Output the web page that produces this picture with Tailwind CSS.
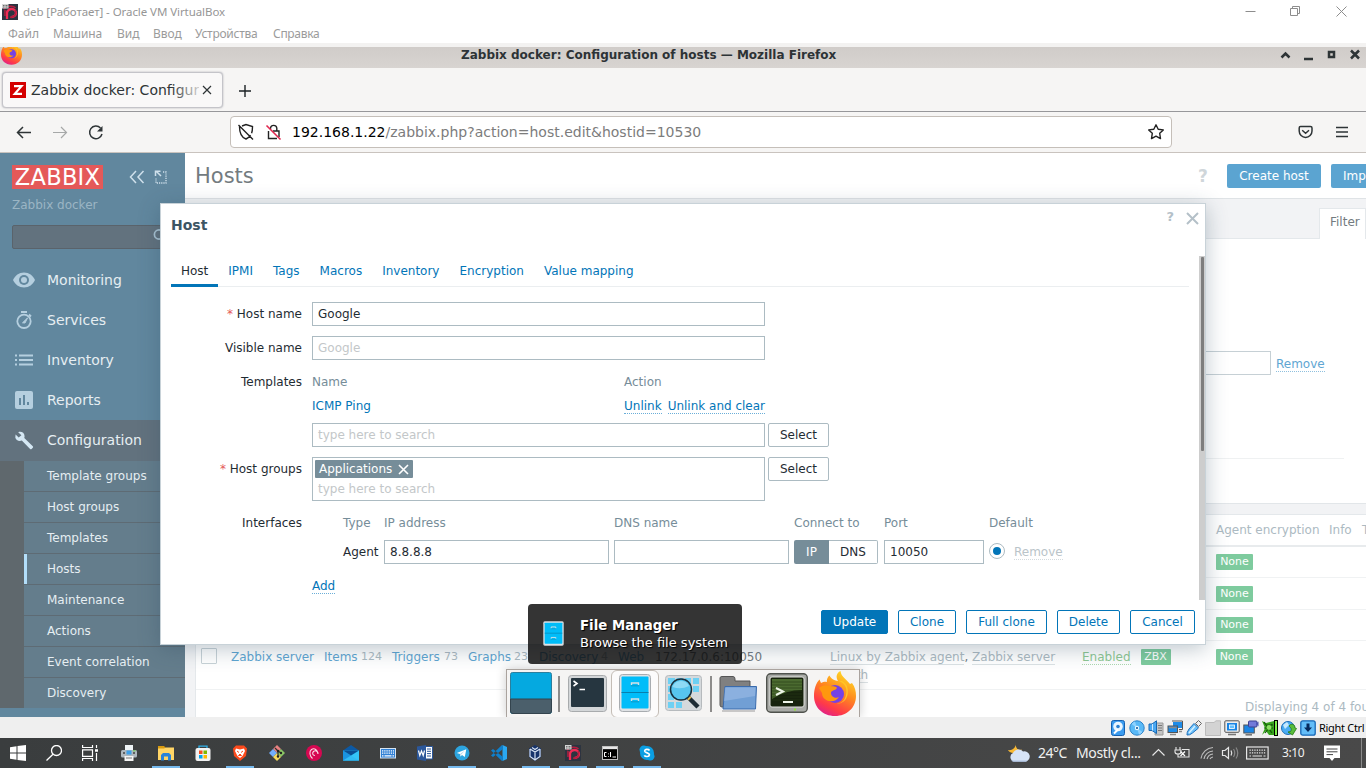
<!DOCTYPE html>
<html lang="en">
<head>
<meta charset="utf-8">
<title>Zabbix docker: Configuration of hosts</title>
<script src="https://cdn.jsdelivr.net/npm/@tailwindcss/browser@4"></script>
</head>
<body class="w-[1366px] h-[768px] overflow-hidden bg-white font-['DejaVu_Sans',sans-serif] text-[12px] leading-[14px] whitespace-nowrap">
<svg class="absolute size-0">
  <defs>
    <linearGradient id="ffo" x1="0.8" y1="0" x2="0.3" y2="1"><stop offset="0" stop-color="#ffe226"/><stop offset=".45" stop-color="#ff8a1f"/><stop offset=".8" stop-color="#ff3b47"/><stop offset="1" stop-color="#e0218a"/></linearGradient>
    <symbol id="firefox" viewBox="0 0 42 45">
      <path d="M21 45C9 45 0 36.500 0 25C0 18 2 12 5.500 8.500L7 12C9 11 11.500 10.500 13 11C12.500 8.500 13.500 6 15.500 4.500C17 8 21 9.500 24 10C21.500 6 22.500 2 26.500 0C27 6 33 8.500 36 13L38 12C41 16 42 20 42 25C42 36.500 33 45 21 45Z" fill="url(#ffo)"/>
      <circle cx="21" cy="23" r="9" fill="#7542e5"/>
      <path d="M5 17C9 13 14 15 17 15C19 15.500 22 15 23 17C21 20 17 19 17 22C17 26 22 28 25 26C21 33 8 31 8 22C7 20 6 19 5 17Z" fill="#ff980e"/>
      <path d="M24 10C30 11 34 17 32 24C31 30 26 33 22 33C31 33 36 25 33 15C31 11 28 9 24 10Z" fill="#ffc526"/>
    </symbol>
    <symbol id="debvm" viewBox="0 0 16 16">
      <rect width="16" height="16" fill="#2c3440"/>
      <path d="M5 15V8.500A4.500 4 0 1 1 9.500 13" fill="none" stroke="#ef2c55" stroke-width="2.300"/>
      <path d="M2 5C5 2 11 1 13.500 4M3 6V12M8 13C13 14 15 9 13 6" fill="none" stroke="#b61d3e" stroke-width="1.500"/>
      <rect width="6.500" height="4.500" fill="#d4d4d4"/><path d="M1 1.500H2.500M1 3H2.500M3.500 1.500H5.500M3.500 3H5.500" stroke="#555" stroke-width=".8"/>
    </symbol>
    <symbol id="cabinet" viewBox="0 0 32 38">
      <rect x=".5" y=".5" width="31" height="37" rx="3" fill="#dfe2e5" stroke="#a8acb0"/>
      <rect x="2.500" y="2.500" width="27" height="32" rx="1" fill="#00bdf9"/>
      <path d="M2.500 18.500H29.500" stroke="#077fae"/>
      <path d="M12.500 11V9H19.500V11M12.500 27V25H19.500V27" fill="none" stroke="#d9e0e4" stroke-width="1.400"/>
      <path d="M12 11.800H20M12 27.800H20" stroke="#167fa6" stroke-width=".6"/>
    </symbol>
  </defs>
</svg>
<div class="relative flex flex-col w-[1366px] h-[768px] overflow-hidden">

  <!-- VirtualBox title and menu -->
  <div class="h-[43px] shrink-0 bg-white text-[#969696] font-['Noto_Sans',sans-serif]">
    <div class="flex h-6 items-center pl-0.5">
      <svg class="size-4"><use href="#debvm"/></svg>
      <span class="ml-[5px] text-[11.5px] tracking-[-0.07px]">deb [Работает] - Oracle VM VirtualBox</span>
      <svg class="ml-auto mr-[17px] -mt-[3px] w-[104px] h-4" viewBox="0 0 104 16" fill="none" stroke="#8d8d8d"><path d="M0.500 8.500H10.500M45.500 5.500H52.500V12.500H45.500ZM47.500 5V3.500H54.500V10.500H53M91.500 3.500L101.500 13.500M101.500 3.500L91.500 13.500"/></svg>
    </div>
    <div class="flex h-[19px] items-center pl-2 text-[12px] leading-5 text-[#9b9b9b]">
      <span class="w-[45px]">Файл</span><span class="w-16 tracking-[-0.1px]">Машина</span><span class="w-9">Вид</span><span class="w-[42px]">Ввод</span><span class="w-[78px] tracking-[-0.25px]">Устройства</span><span class="tracking-[-0.3px]">Справка</span>
    </div>
  </div>
  <div class="h-1 shrink-0 bg-[#f3f2f1]"></div>

  <!-- Guest window title -->
  <div class="flex h-[21px] shrink-0 items-start overflow-hidden bg-gradient-to-b from-[#d0ccc9] to-[#d8d4d1]">
    <svg class="-mt-[5px] ml-px w-[21px] h-[23px]"><use href="#firefox"/></svg>
    <span class="ml-[439px] mt-px text-[12px] font-bold text-[#2d3336]">Zabbix docker: Configuration of hosts — Mozilla Firefox</span>
    <svg class="ml-auto mr-[6px] mt-[2px] w-[80px] h-3" viewBox="0 0 80 12" fill="none" stroke="#2e3436" stroke-width="2.500"><path d="M1.500 8.500L5.500 4.500L9.500 8.500M24 10H33M49 3H54V8H49ZM71 1.500L79 9.500M79 1.500L71 9.500"/></svg>
  </div>

  <!-- Tab strip -->
  <div class="flex h-[44px] shrink-0 border-b border-[#97979a] bg-[#f6f5f4]">
    <div class="ml-[2px] mt-[4px] flex h-[36px] w-[221px] items-center rounded border border-[#c4c4c9] bg-[#f9f8f8] shadow-[0_0_2px_#aaaab0]">
      <svg class="ml-[7px] size-4" viewBox="0 0 16 16"><rect width="16" height="16" fill="#d40000"/><path d="M4 4.200H11.500L4.800 11.800H12" fill="none" stroke="#fff" stroke-width="2.200"/></svg>
      <div class="relative ml-[5px] w-[168px] overflow-hidden text-[14px] leading-5 text-[#2e3436]">Zabbix docker: Configuration<div class="absolute inset-y-0 right-0 w-7 bg-gradient-to-r from-transparent to-[#f9f8f8]/80"></div></div>
      <svg class="ml-[3px] size-2.5" viewBox="0 0 10 10" stroke="#2e3436" stroke-width="1.200"><path d="M1 1L9 9M9 1L1 9"/></svg>
    </div>
    <svg class="ml-4 mt-[17px] size-3" viewBox="0 0 12 12" stroke="#1c2224" stroke-width="1.400"><path d="M6 0V12M0 6H12"/></svg>
  </div>

  <!-- Address bar -->
  <div class="flex h-[41px] shrink-0 items-center border-b border-[#c9c3be] bg-[#f6f5f4]">
    <svg class="ml-4 w-[90px] h-5" viewBox="0 0 90 20" fill="none" stroke="#2e3436" stroke-width="1.500"><path d="M15 10.500H2M7 5L1.500 10.500L7 16"/><path d="M37 10.500H50M45 5L50.500 10.500L45 16" stroke="#a6a8a8" stroke-width="1.200"/><path d="M84.500 6A6.300 6.300 0 1 0 86 12"/><path d="M86.500 4V9.500H81Z" fill="#2e3436" stroke="none"/></svg>
    <div class="ml-[124px] flex h-8 w-[942px] items-center rounded border border-[#c5bfb9] bg-white">
      <svg class="ml-[6px] w-[46px] h-[18px]" viewBox="0 0 46 18" fill="none" stroke="#222" stroke-width="1.400"><path d="M2.500 3.500C2.500 11 4.500 14.500 9 16C11 15 12.500 14 13.500 12M5 3L9 1.500L15.500 3.500C15.500 6.500 15.300 8.500 14.600 10.300M1.500 2L16 16.500"/><path d="M33.500 6V5A3.200 3.200 0 0 1 39.800 5V8M31.500 8V15.500H40M36 8H42V14"/><path d="M29.500 2.500L43.500 16.500" stroke="#e22850" stroke-width="1.600"/></svg>
      <span class="ml-[9px] text-[14px] leading-5 text-[#7c7c7c]"><span class="text-black">192.168.1.22</span>/zabbix.php?action=host.edit&amp;hostid=10530</span>
      <svg class="ml-auto mr-[6px] size-[18px]" viewBox="0 0 18 18" fill="none" stroke="#222" stroke-width="1.400" stroke-linejoin="round"><path d="M9 1.800L11.200 6.200L16.300 6.900L12.700 10.300L13.500 15.600L9 13.100L4.500 15.600L5.300 10.300L1.700 6.900L6.800 6.200Z"/></svg>
    </div>
    <svg class="ml-auto mr-[17px] w-[51px] h-[14px]" viewBox="0 0 51 14" fill="none" stroke="#2e3436" stroke-width="1.500"><path d="M2.500 1.500H12.500Q14 1.500 14 3V6A6.300 6.300 0 0 1 1.200 6V3Q1.200 1.500 2.500 1.500ZM4.200 5.200L7.600 8.200L11 5.200"/><path d="M38 2.500H50M38 7H50M38 11.500H50"/></svg>
  </div>

  <!-- Zabbix page -->
  <div class="flex h-[564px] shrink-0 overflow-hidden">
    <aside class="flex w-[185px] shrink-0 flex-col bg-[#61879e] text-[#e6eef2]">
      <div class="flex h-[36px] items-end pl-3">
        <div class="flex h-6 w-[91px] items-center justify-center bg-[#e45959] text-[22.5px] leading-6 tracking-[0.3px] text-white">ZABBIX</div>
        <svg class="ml-[26px] mb-[5px] w-[40px] h-[14px]" viewBox="0 0 40 14" fill="none" stroke="#cfe0eb" stroke-width="1.500"><path d="M7 1L1.500 7L7 13M14.500 1L9 7L14.500 13"/><path d="M34 2H37V13H27V8" stroke-width="1.300" stroke-dasharray="1.200 1"/><path d="M27.500 1.500L32 6M26.500 6V1.200H31.500" stroke-width="1.500"/></svg>
      </div>
      <div class="mt-[9px] pl-3 text-[#9bb5c4]">Zabbix docker</div>
      <div class="ml-3 mt-[13px] flex h-6 w-[161px] items-center rounded-[2px] border border-[#5a636b] bg-[#62727e]"><svg class="ml-[140px] size-4 -mt-0.5" viewBox="0 0 16 16" fill="none" stroke="#a9c3d3" stroke-width="1.700"><circle cx="6" cy="6.500" r="4.600"/><path d="M9.500 10L14 14.500"/></svg></div>
      <nav class="mt-[11px] flex flex-col text-[14px] leading-5">
        <div class="flex h-10 items-center gap-3 pl-[13px]"><svg class="w-[22px] h-4" viewBox="0 0 22 16"><path d="M0 8C2 3.500 6 .5 11 .5S20 3.500 22 8C20 12.500 16 15.500 11 15.500S2 12.500 0 8Z" fill="#b5cfdf"/><circle cx="11" cy="8" r="5" fill="#61879e"/><circle cx="11" cy="8" r="3" fill="#b5cfdf"/></svg>Monitoring</div>
        <div class="flex h-10 items-center gap-[13px] pl-4"><svg class="w-[18px] h-[18px]" viewBox="0 0 18 18" fill="none" stroke="#b5cfdf" stroke-width="1.800"><circle cx="8" cy="10.300" r="6.700"/><path d="M5 1H11M13 3.500L15 5.500"/><path d="M6.500 11.800L11.500 7L9 12Z" fill="#b5cfdf" stroke-width="1"/></svg>Services</div>
        <div class="flex h-10 items-center gap-[14px] pl-[15px]"><svg class="w-[18px] h-3" viewBox="0 0 18 12" stroke="#b5cfdf" stroke-width="1.800"><path d="M0 1.500H2M4 1.500H18M0 6H2M4 6H18M0 10.500H2M4 10.500H18"/></svg>Inventory</div>
        <div class="flex h-10 items-center gap-[14px] pl-[15px]"><svg class="size-[18px]" viewBox="0 0 18 18"><rect width="18" height="18" rx="2" fill="#b5cfdf"/><path d="M5 14V7M9 14V4M13 14V11" stroke="#61879e" stroke-width="2"/></svg>Reports</div>
        <div class="flex h-[41px] items-center gap-[13px] bg-[#62727e] pl-[15px] pb-px"><svg class="w-[19px] h-[19px]" viewBox="0 0 19 19"><path d="M3.200 1.200C6 .2 9.500 1.500 9.600 5.200L9.300 7L17.800 15.300Q18.500 16 17.800 16.800L16.600 18Q15.800 18.600 15.100 18L6.800 9.600C4 10.500 1 9.500 .3 6.500L.6 3.600L3.700 6.600L6.400 4.200Z" fill="#d5e8f4"/></svg>Configuration</div>
      </nav>
      <div class="flex shrink-0 flex-col border-l-[24px] border-[#5f686d] text-[12px] leading-[14px] [&>div]:flex [&>div]:h-[31px] [&>div]:items-center [&>div]:border-b [&>div]:border-[#5e6b74] [&>div]:bg-[#647d8c] [&>div]:pl-[23px]">
        <div>Template groups</div><div>Host groups</div><div>Templates</div>
        <div class="relative"><span class="absolute inset-y-0 left-0 w-[3px] bg-[#b3def9]"></span>Hosts</div>
        <div>Maintenance</div><div>Actions</div><div>Event correlation</div><div class="!h-[30px] !border-b-0">Discovery</div>
      </div>
    </aside>

    <main class="flex w-[1181px] shrink-0 flex-col bg-[#f2f3f5]">
      <div class="flex h-[46px] shrink-0 items-center border-b border-[#dfe3e6] bg-white pl-[10px] [&>*]:shrink-0">
        <h1 class="w-[1003px] pt-px text-[21px] leading-7 text-[#737b7f]">Hosts</h1>
        <span class="w-[29px] text-[17px] font-bold text-[#cfd6da]">?</span>
        <span class="flex h-6 w-[94px] items-center justify-center rounded-[2px] bg-[#5ba4d1] text-white">Create host</span>
        <span class="ml-[10px] flex h-6 w-[90px] items-center rounded-[2px] bg-[#5ba4d1] pl-3 text-white">Import</span>
      </div>
      <div class="flex h-[40px] shrink-0 items-end border-b border-[#e4e8eb]">
        <div class="ml-[1134px] -mb-px flex h-[31px] w-20 items-center border border-b-0 border-[#e4e8eb] bg-white pl-[10px] pb-1 text-[#737b7f]">Filter</div>
      </div>
      <div class="ml-[10px] h-[265px] shrink-0 border-b border-l border-[#e2e6e9] bg-white">
        <div class="flex items-start pt-[112px] ml-[600px]">
          <div class="h-6 w-[475px] border border-[#c6d0d5]"></div>
          <span class="ml-[5px] mt-[6px] border-b border-dotted border-[#8fc0de] text-[#5fa6d2]">Remove</span>
        </div>
        <div class="mr-[22px] mt-[83px] h-px bg-[#eff1f2]"></div>
      </div>
      <!-- Host list -->
      <div class="ml-[10px] mt-[10px] flex grow flex-col border-l border-t border-[#e4e8eb] bg-white text-[#acbac2]">
        <div class="flex h-[32px] shrink-0 items-center border-b-2 border-[#e8ebed] pl-[1020px] [&>span]:shrink-0"><span class="w-[113px]">Agent encryption</span><span class="w-[33px]">Info</span><span>Tags</span></div>
        <div class="flex h-[31px] shrink-0 items-center border-b border-[#f0f2f3] pl-[1020px]"><span class="flex h-4 w-[37px] items-center justify-center rounded-[1px] bg-[#7ecb9e] text-[11px] text-white">None</span></div>
        <div class="flex h-[32px] shrink-0 items-center border-b border-[#f0f2f3] pl-[1020px]"><span class="flex h-4 w-[37px] items-center justify-center rounded-[1px] bg-[#7ecb9e] text-[11px] text-white">None</span></div>
        <div class="flex h-[31px] shrink-0 items-center border-b border-[#f0f2f3] pl-[1020px]"><span class="flex h-4 w-[37px] items-center justify-center rounded-[1px] bg-[#7ecb9e] text-[11px] text-white">None</span></div>
        <div class="flex h-[49px] shrink-0 items-start border-b border-[#f0f2f3] pl-[5px] pt-[7px] [&>span]:mt-[2px]">
          <i class="mr-[14px] size-4 rounded-[1px] border border-[#c8d2d7]"></i>
          <span class="w-[93px] text-[#5fa6d2]">Zabbix server</span>
          <span class="w-[37px] text-[#5fa6d2]">Items</span><span class="w-[31px] text-[11px]">124</span>
          <span class="w-[52px] text-[#5fa6d2]">Triggers</span><span class="w-[24px] text-[11px]">73</span>
          <span class="w-[46px] text-[#5fa6d2]">Graphs</span><span class="w-[25px] text-[11px]">23</span>
          <span class="w-[62px] text-[#5fa6d2]">Discovery</span><span class="w-[17px] text-[11px]">4</span>
          <span class="w-[37px] text-[#5fa6d2]">Web</span>
          <span class="w-[175px] text-[#737b7f]">172.17.0.6:10050</span>
          <span class="w-[252px] whitespace-normal leading-[18px] relative -top-[2px]"><u class="border-b border-[#dce2e5] no-underline">Linux by Zabbix agent</u><b class="font-normal text-[#737b7f]">,</b> <u class="border-b border-[#dce2e5] no-underline">Zabbix server health</u></span>
          <span class="mr-[10px] border-b border-dotted border-[#aed9b2] text-[#8ec893]">Enabled</span>
          <i class="mt-px flex h-4 w-[30px] items-center justify-center rounded-[1px] bg-[#7ecb9e] text-[11px] not-italic text-white">ZBX</i>
          <i class="mt-px ml-[45px] flex h-4 w-[37px] items-center justify-center rounded-[1px] bg-[#7ecb9e] text-[11px] not-italic text-white">None</i>
        </div>
        <div class="mt-[10px] pl-[1049px]">Displaying 4 of 4 found</div>
      </div>
    </main>
  </div>

  <!-- Machine status bar -->
  <div class="z-10 flex h-[21px] shrink-0 items-center justify-end gap-[3px] bg-[#efefef] pr-[2px] font-['Noto_Sans',sans-serif] text-black [&>svg]:size-4">
    <svg viewBox="0 0 16 16"><rect x="1.500" y=".5" width="13" height="15" rx="2" fill="#3a9bef" stroke="#1560b0"/><circle cx="8" cy="6.500" r="4.800" fill="#e8f5ff"/><circle cx="8" cy="6.500" r="1.800" fill="#2a7fd0"/><path d="M4 13.500L8 9.500" stroke="#fff" stroke-width="2"/></svg>
    <svg viewBox="0 0 16 16"><circle cx="8" cy="8" r="7.200" fill="#59b9f7" stroke="#2a82c9"/><path d="M8 8L2.500 4A7 7 0 0 1 6 1.500ZM8 8L13.500 12A7 7 0 0 1 10 14.500Z" fill="#8fd2ff"/><circle cx="8" cy="8" r="2.200" fill="#e7f6ff"/><circle cx="8" cy="8" r="1" fill="#0a4f95"/></svg>
    <svg viewBox="0 0 16 16"><path d="M8 3H15V15H7Z" fill="#c4c4c4" stroke="#999"/><path d="M10 5.500H14M10 8H14M10 10.500H14" stroke="#777"/><path d="M1 4H4L8.500 .8V13.500L4 10.500H1Z" fill="#4aa8f2" stroke="#1769b5"/><path d="M4.500 4V10.500" stroke="#cdeaff"/></svg>
    <svg viewBox="0 0 16 16"><rect x="5.500" y="1.500" width="10" height="7" fill="#1c8be8" stroke="#f4f4f4"/><path d="M5 1H15.500V9.500H12" fill="none" stroke="#555"/><rect x="1" y="6" width="9.500" height="6.500" fill="#1c8be8" stroke="#555"/><path d="M2 7.500H9.500M3 14.500H9M12 11.500H15" stroke="#8b8b8b" stroke-width="1.500"/></svg>
    <svg viewBox="0 0 16 16"><path d="M9.500 3.500L12.500 .5L15.500 3.500L12.500 6.500Z" fill="#eee" stroke="#666"/><path d="M8 3.500L12.500 8L6.500 13Q3.500 15.500 1 15Q.5 12.500 3 9Z" fill="#6bc0fa" stroke="#1d70bd"/><path d="M3 13L9 6" stroke="#d6f0ff" stroke-width="1.500"/></svg>
    <svg viewBox="0 0 16 16"><path d="M.5 2.500H9L11 .8H15.500V15.500H.5Z" fill="#d3d3d3" stroke="#bcbcbc"/></svg>
    <svg viewBox="0 0 16 16"><rect x=".8" y=".8" width="14.400" height="11.500" rx="1" fill="#eee" stroke="#555"/><rect x="3" y="3" width="10" height="7.500" fill="#1a85e4"/><rect x="5.500" y="5" width="5" height="3.500" fill="#65c2ff" stroke="#fff" stroke-width=".8"/><path d="M4 14.500H12" stroke="#777" stroke-width="1.600"/></svg>
    <svg viewBox="0 0 16 16"><rect x=".8" y="5" width="10.500" height="8" fill="#1a85e4" stroke="#555"/><rect x="5.500" y="1" width="8.500" height="6" rx="1" fill="#7279d9" stroke="#3b4090"/><path d="M13 3.500L15.500 1.500V6.500Z" fill="#4e54b2"/><path d="M2.500 14.800H9" stroke="#777" stroke-width="1.600"/></svg>
    <svg viewBox="0 0 16 16"><path d="M0 1L4 3L12 1V15H7L4 11L0 15L3 8Z" fill="#36a41c"/><path d="M2 2L10 13M3 13L10 4M5 5H11M2 8H11" stroke="#14540a" stroke-width="1.200"/><circle cx="7" cy="7.500" r="2.400" fill="#8de063"/><rect x="12.500" y=".5" width="3" height="15" fill="#7df04a" stroke="#000"/></svg>
    <svg viewBox="0 0 16 16"><circle cx="7" cy="8" r="6.500" fill="#4aacf3" stroke="#1d6db8"/><path d="M2 5L6 2L8 5L4 9Z" fill="#c5e9ff"/><path d="M8 6C10 3 14 4 14 8L15.500 8.500L11.500 15L7 12L9.500 11.500C11 9 10 8 8 6Z" fill="#58bc3a" stroke="#25760f" stroke-width=".8"/></svg>
    <svg viewBox="0 0 16 16"><rect x=".8" y=".8" width="14.400" height="14.400" rx="2" fill="#63bdf8" stroke="#1667b6" stroke-width="1.300"/><path d="M6.500 3.500H9.500V7.500H12L8 12L4 7.500H6.500Z" fill="#07295c"/></svg>
    <span class="w-[45px] text-[11px] tracking-[-0.3px]">Right Ctrl</span>
  </div>

  <!-- Taskbar -->
  <div class="flex h-[30px] shrink-0 items-center bg-gradient-to-r from-[#3a3d3e] to-[#494949] text-[#f1f1f1] font-['Noto_Sans',sans-serif] [&>div]:relative [&>div]:flex [&>div]:h-[30px] [&>div]:w-[37px] [&>div]:shrink-0 [&>div]:items-center [&>div]:pl-[10px] [&>div>svg]:size-4 [&>div>i]:absolute [&>div>i]:bottom-0 [&>div>i]:left-1 [&>div>i]:h-[2px] [&>div>i]:w-7 [&>div>i]:bg-[#76b9ed]">
    <div><svg viewBox="0 0 16 16" fill="#fff"><path d="M0 2.200L6.500 1.200V7.500H0ZM7.500 1L16 0V7.500H7.500ZM0 8.500H6.500V14.800L0 13.800ZM7.500 8.500H16V16L7.500 15Z"/></svg></div>
    <div><svg class="-ml-px" viewBox="0 0 16 16" fill="none" stroke="#fff" stroke-width="1.300"><circle cx="10.500" cy="5.500" r="5"/><path d="M7 9.300L.5 15.500"/></svg></div>
    <div><svg class="-ml-[2px]" viewBox="0 0 16 16" fill="none" stroke="#fff" stroke-width="1.200"><path d="M.6 0V2.500H10.500V0M.6 4.800H10.500V11.300H.6ZM.6 16V13.500H10.500V16M14.500 0V3M14.500 8V16"/><path d="M13 5.500H16" stroke-width="2.500"/></svg></div>
    <div><svg viewBox="0 0 16 16"><rect x="4" y="0" width="8" height="6" fill="#eef3f6"/><rect x="0" y="5" width="16" height="7.500" rx="1.500" fill="#aeb7be"/><rect x="5.500" y="5.500" width="5" height="4" fill="#3d9fe8"/><circle cx="3" cy="8" r="1" fill="#444"/><circle cx="13" cy="8" r="1" fill="#444"/><path d="M12 5.800H14.500" stroke="#65c949"/><rect x="3.500" y="11" width="9" height="5" fill="#f4f4f4"/><path d="M5 13H11" stroke="#777"/></svg></div>
    <div><i></i><svg viewBox="0 0 16 16"><path d="M0 1H6L8 3V6H0Z" fill="#d89a10"/><path d="M0 3.500H6L8 2.500H16V15H0Z" fill="#ffd566"/><path d="M3 15.500V10L5 8H11L13 10V15.500H10V11.500H6V15.500Z" fill="#2a83d8"/></svg></div>
    <div><svg viewBox="0 0 16 16"><path d="M4 4V1.200H12V4" fill="none" stroke="#2fb1ea" stroke-width="1.300"/><rect x="0.500" y="3" width="15" height="13" rx="2" fill="#f2f2f2"/><path d="M4 5.500H7.500V9H4Z" fill="#f25022"/><path d="M8.500 5.500H12V9H8.500Z" fill="#7fba00"/><path d="M4 10H7.500V13.500H4Z" fill="#00a4ef"/><path d="M8.500 10H12V13.500H8.500Z" fill="#ffb900"/></svg></div>
    <div><i></i><svg viewBox="0 0 16 16"><path d="M4 .5H12L15 3.500L14 11L8 16L2 11L1 3.500Z" fill="#fb4a1c"/><path d="M4 3.500L8 4.500L12 3.500L13 6L10.500 11L8 13L5.500 11L3 6Z" fill="#fff"/><path d="M5 6L7 7.500M11 6L9 7.500M6.500 10.500H9.500L8 9Z" stroke="#fb4a1c" fill="#fb4a1c"/></svg></div>
    <div><svg viewBox="0 0 16 16"><path d="M8 0L12 4L8 8L4 4Z" fill="#e98181"/><path d="M4 4L8 8L4 12L0 8Z" fill="#72aefb"/><path d="M12 4L16 8L12 12L8 8Z" fill="#8bc665"/><path d="M8 8L12 12L8 16L4 12Z" fill="#f6d95b"/><path d="M6 3L9 6V12M9 6L12 8" stroke="#303030" fill="none" stroke-width="1.200"/><circle cx="9" cy="6" r="1.200" fill="#222"/><circle cx="12" cy="8" r="1.200" fill="#222"/><circle cx="9" cy="11.500" r="1.200" fill="#222"/></svg></div>
    <div><svg viewBox="0 0 16 16"><circle cx="8" cy="8" r="8" fill="#d70751"/><path d="M9 10.500C6.500 10.500 6 8 7.500 6.500C9.500 4.800 12.500 6.500 12 9C11.500 5 8.500 2.500 5.500 4.500C3 6.500 3.500 11 6.500 13.500" fill="none" stroke="#fff" stroke-width="1.100" opacity=".85"/></svg></div>
    <div><svg viewBox="0 0 16 16"><path d="M8 0L16 5.500V8H0V5.500Z" fill="#0c59a4"/><path d="M0 5.500H16V15.500H0Z" fill="#2cc0f5"/><path d="M0 5.500L16 15.500H0Z" fill="#1a94e0"/><path d="M0 15.500L16 5.500V15.500Z" fill="#37c6fa" opacity=".8"/><path d="M0 5.500H16L8 10.500Z" fill="#0a4f94"/></svg></div>
    <div><svg viewBox="0 0 16 16"><rect x=".5" y="3.500" width="15" height="9.500" fill="#2f7fd4" stroke="#d5e3f0"/><path d="M2 5.800H14M2 8.200H14" stroke="#fff" stroke-width="1.300" stroke-dasharray="1.300 .9"/><path d="M2 10.800H3.500M4.500 10.800H11.500M12.500 10.800H14" stroke="#fff" stroke-width="1.200"/></svg></div>
    <div><svg viewBox="0 0 16 16"><path d="M8 1.500H15.500V14H8Z" fill="#fff" stroke="#2b579a"/><path d="M10 4H14M10 6.300H14M10 8.600H14M10 11H14" stroke="#2b579a"/><path d="M0 1.500L9 0V16L0 14.500Z" fill="#2b579a"/><path d="M1.500 5.500L2.800 10.500L4.500 6L6.200 10.500L7.500 5.500" fill="none" stroke="#fff" stroke-width="1.200"/></svg></div>
    <div><i></i><svg viewBox="0 0 16 16"><circle cx="8" cy="8" r="7.500" fill="#2da5e0"/><path d="M2.800 8L12.300 4.200L10.800 12L8 10L6.500 11.500L6 9Z" fill="#fff"/><path d="M6 9L11 5.500L7 9.700L6.500 11.500Z" fill="#b8d8ec"/></svg></div>
    <div><svg viewBox="0 0 16 16"><path d="M11.500 0L16 2V14L11.500 16Z" fill="#2aa8f2"/><path d="M11.500 0L12 4L2 12L0 10.500L11 0ZM11.500 16L12 12L2 4L0 5.500L11 16Z" fill="#0f80cc"/></svg></div>
    <div><i></i><svg class="-ml-px" viewBox="0 0 16 16"><path d="M8 0L14 3.500V12L8 16L2 12V3.500Z" fill="#17346b"/><path d="M3 4L8 7L13 4M8 7V15M5 2.500L8 4.500L11 2.500M3 4V11.500L8 15L13 11.500V4" fill="none" stroke="#d7e2f1" stroke-width="1.200"/></svg></div>
    <div><i></i><svg><use href="#debvm"/></svg></div>
    <div><i></i><svg viewBox="0 0 16 16"><rect x=".5" y="1.500" width="15" height="13" fill="#000" stroke="#bdbdbd"/><path d="M1 3H15" stroke="#e8e8e8" stroke-width="2.300"/><path d="M4.500 7.500H2.500V11.500H4.500M6.500 8.500V9.300M6.500 11V11.700M8.500 7V12M10.500 12H14" stroke="#fff" fill="none"/></svg></div>
    <div><i></i><svg viewBox="0 0 16 16"><circle cx="8" cy="8" r="7" fill="#0b9fe3"/><circle cx="4.800" cy="4.800" r="4.300" fill="#0b9fe3"/><circle cx="11.200" cy="11.200" r="4.300" fill="#0b9fe3"/><path d="M10.500 5.500C9.500 4 5.500 4 5.700 6.200C6 8.300 10.500 7.500 10.400 9.800C10.200 12 6.200 12 5.300 10.300" fill="none" stroke="#fff" stroke-width="1.700"/></svg></div>

    <svg class="ml-auto w-[24px] h-[20px] shrink-0" viewBox="0 0 24 20"><path d="M9 0C8 5 11 8 15 6.500C13 12 3 11 1 7C6 8 9 4 9 0Z" fill="#f9b934"/><path d="M7 18.500A4.500 4.500 0 0 1 6 10A6 6 0 0 1 16 8.500A5 5 0 0 1 19 18.500Z" fill="#d6e3f7"/><path d="M4 17.500H21L19 18.700H6Z" fill="#aec2e0"/></svg>
    <span class="ml-[7px] w-[38px] text-[14px] leading-5 tracking-[-0.5px]">24°C</span>
    <span class="w-[76px] text-[14px] leading-5 tracking-[-0.35px]">Mostly cl...</span>
    <svg class="w-[127px] h-[20px] shrink-0" viewBox="0 0 127 20" fill="none" stroke="#e6e6e6" stroke-width="1.200"><path d="M.500 12.500L6.500 6.500L12.500 12.500"/><path d="M24 4V7M28 4V7M23 7H29V9Q29 11 26 11Q23 11 23 9ZM26 11V14H28M30 6.500H37V14H28" stroke-width="1.100"/><path d="M28.500 8.500L33 13M33 8.500L28.500 13" stroke="#fff"/><path d="M49 15.500A13 13 0 0 1 61 4.500M52 16A10 10 0 0 1 61 8M55 16A7 7 0 0 1 61 11M58 16A3.500 3.500 0 0 1 61 14" stroke="#bdbdbd"/><path d="M70.500 7.500H73L76.500 4.500V15.500L73 12.500H70.500Z"/><path d="M79 7.500Q80.500 10 79 12.500"/><path d="M81.500 6Q84 10 81.500 14M84 4.500Q87.500 10 84 15.500" stroke="#888"/><rect x="94.600" y="4" width="21.500" height="12"/><path d="M97.500 7.200H114M97.500 9.800H114" stroke-dasharray="1.300 1.100"/><path d="M97.500 13H99M100.500 13H110M111.500 13H113.500"/></svg>
    <span class="ml-[3px] w-[42px] text-[12px] tracking-[-0.4px]">3:10</span>
    <svg class="mr-[21px] w-4 h-[17px] shrink-0" viewBox="0 0 16 17"><path d="M0 .5H16V13H10.500L8 16L5.500 13H0Z" fill="#fff"/><path d="M2.500 4H13.500M2.500 6.800H13.500M2.500 9.600H9" stroke="#444"/></svg>
    <span class="mr-1 h-[30px] w-px bg-[#8a8a8a]"></span>
  </div>

  <!-- Host dialog -->
  <section class="absolute left-[160px] top-[203px] flex h-[442px] w-[1046px] flex-col border border-[#c8d2d8] bg-white text-[#1f2c33] shadow-[0_4px_20px_rgba(40,70,90,0.3)]">
    <div class="flex h-[52px] shrink-0 items-start pl-[10px]">
      <h2 class="mt-[13px] text-[14px] font-bold leading-4 text-[#3c5563]">Host</h2>
      <span class="ml-auto mt-[6px] text-[13px] font-bold text-[#b4c0c8]">?</span>
      <svg class="ml-3 mr-[6px] mt-[8px] size-[13px]" viewBox="0 0 13 13" stroke="#b4c0c8" stroke-width="2"><path d="M1 1L12 12M12 1L1 12"/></svg>
    </div>
    <div class="flex h-[344px] shrink-0">
      <div class="flex w-[1038px] flex-col pl-[10px]">
        <div class="mr-[10px] flex h-[31px] shrink-0 border-b border-[#ebeef0] text-[#0275b8] [&>span]:h-[31px] [&>span]:px-[10px] [&>span]:pt-2">
          <span class="border-b-[3px] border-[#0275b8] text-[#1f2c33]">Host</span><span>IPMI</span><span>Tags</span><span>Macros</span><span>Inventory</span><span>Encryption</span><span>Value mapping</span>
        </div>
        <div class="mt-[15px] flex h-6 items-center"><span class="mr-[10px] w-[131px] text-right"><b class="font-normal text-[#e45959]">*</b> Host name</span><div class="flex h-6 w-[453px] items-center border border-[#acbbc2] pl-[5px]">Google</div></div>
        <div class="mt-[10px] flex h-6 items-center"><span class="mr-[10px] w-[131px] text-right">Visible name</span><div class="flex h-6 w-[453px] items-center border border-[#acbbc2] pl-[5px] text-[#c3c7c9]">Google</div></div>
        <div class="mt-[10px] flex h-6 items-center"><span class="mr-[10px] w-[131px] text-right">Templates</span><span class="w-[312px] text-[#768d99]">Name</span><span class="text-[#768d99]">Action</span></div>
        <div class="flex h-6 items-center pl-[141px] text-[#0275b8]"><span class="w-[312px]">ICMP Ping</span><span class="mt-px mr-[6px] border-b border-dotted border-[#6aaed8]">Unlink</span><span class="mt-px border-b border-dotted border-[#6aaed8]">Unlink and clear</span></div>
        <div class="mt-[5px] flex h-6 items-center pl-[141px]"><div class="flex h-6 w-[453px] items-center border border-[#acbbc2] pl-[5px] text-[#c3c7c9]">type here to search</div><span class="ml-[3px] flex h-6 w-[61px] items-center justify-center rounded-[2px] border border-[#acbbc2]">Select</span></div>
        <div class="mt-[10px] flex h-[44px] items-start"><span class="mr-[10px] mt-[5px] w-[131px] text-right"><b class="font-normal text-[#e45959]">*</b> Host groups</span><div class="h-[44px] w-[453px] border border-[#acbbc2] pl-[2px] pt-[2px]"><div class="flex h-[18px] w-[98px] items-center rounded-[1px] bg-[#768d99] pl-1 text-white">Applications<svg class="ml-[6px] mt-px size-[11px]" viewBox="0 0 11 11" stroke="#fff" stroke-width="1.600"><path d="M1 1L10 10M10 1L1 10"/></svg></div><div class="mt-1 pl-[3px] text-[#c3c7c9]">type here to search</div></div><span class="ml-[3px] flex h-6 w-[61px] items-center justify-center rounded-[2px] border border-[#acbbc2]">Select</span></div>
        <div class="mt-[10px] flex h-6 items-center text-[#768d99]"><span class="mr-[41px] w-[131px] text-right text-[#1f2c33]">Interfaces</span><span class="w-[41px]">Type</span><span class="w-[230px]">IP address</span><span class="w-[180px]">DNS name</span><span class="w-[90px]">Connect to</span><span class="w-[105px]">Port</span><span>Default</span></div>
        <div class="mt-[5px] flex h-6 items-center pl-[172px]"><span class="w-[41px]">Agent</span><div class="mr-[5px] flex h-6 w-[225px] items-center border border-[#acbbc2] pl-[5px]">8.8.8.8</div><div class="mr-[5px] h-6 w-[175px] border border-[#acbbc2]"></div><span class="flex h-6 w-[35px] items-center justify-center rounded-l-[2px] bg-[#768d99] text-white">IP</span><span class="mr-[6px] flex h-6 w-[49px] items-center justify-center rounded-r-[2px] border border-l-0 border-[#acbbc2]">DNS</span><div class="mr-[5px] flex h-6 w-[100px] items-center border border-[#acbbc2] pl-[5px]">10050</div><span class="mr-[9px] -mt-0.5 flex size-4 items-center justify-center rounded-full border border-[#acbbc2]"><i class="size-2 rounded-full bg-[#0275b8]"></i></span><span class="mt-px border-b border-dotted border-[#d3dade] text-[#bac4c9]">Remove</span></div>
        <div class="mt-[10px] flex h-6 items-center pl-[141px]"><span class="mt-px border-b border-dotted border-[#6aaed8] text-[#0275b8]">Add</span></div>
      </div>
      <div class="w-[6px] bg-[#cdcdcd] pl-[2px] pt-px"><div class="h-[194px] w-[3px] rounded-[1px] bg-[#7d7d7d]"></div></div>
    </div>
    <div class="mt-[10px] flex justify-end gap-[10px] pr-[10px] text-[#0275b8] [&>span]:flex [&>span]:h-6 [&>span]:items-center [&>span]:justify-center [&>span]:rounded-[2px] [&>span]:border [&>span]:border-[#0275b8]">
      <span class="w-[67px] bg-[#0275b8] text-white">Update</span><span class="w-[58px]">Clone</span><span class="w-[81px]">Full clone</span><span class="w-[63px]">Delete</span><span class="w-[65px]">Cancel</span>
    </div>
  </section>

  <!-- Panel dock -->
  <div class="absolute left-[506px] top-[669px] flex h-[48px] w-[354px] items-center border border-b-0 border-[#aaa39e] bg-[#f5f4f3] shadow-[0_0_10px_rgba(0,0,0,0.2)] [clip-path:inset(-12px_-12px_0_-12px)] [&>*]:shrink-0">
    <svg class="ml-[3px] -mt-px w-[42px] h-[42px]" viewBox="0 0 42 42"><rect x=".5" y=".5" width="41" height="41" rx="2" fill="#05a9e0" stroke="#2b7f9e"/><path d="M.500 27H41.500V39Q41.500 41.500 39 41.500H3Q.5 41.500 .5 39Z" fill="#4b5f6b" stroke="#34444e"/></svg>
    <span class="ml-[6px] h-[36px] w-[2px] bg-[#8d8c8b]"></span>
    <svg class="ml-[8px] -mt-px w-[39px] h-[37px]" viewBox="0 0 39 37"><rect x=".5" y=".5" width="38" height="36" rx="3" fill="#d3d6d8" stroke="#a8abad"/><rect x="3" y="3" width="33" height="29" rx="1" fill="#263640"/><path d="M5.500 6L9 8.500L5.500 11M11.500 14.500H17" fill="none" stroke="#fff" stroke-width="1.600"/></svg>
    <div class="ml-[4px] flex h-[48px] w-[48px] items-center justify-center rounded-md border border-[#c4bdb6] bg-[#fcfbfb]"><svg class="-mt-0.5 w-[32px] h-[38px]"><use href="#cabinet"/></svg></div>
    <svg class="ml-[6px] -mt-0.5 w-[37px] h-[36px]" viewBox="0 0 37 36"><rect x=".5" y=".5" width="36" height="35" rx="3" fill="#d5d9dc" stroke="#b6babd"/><path d="M3 3H10V9H3ZM11.500 3H18V9H11.500ZM20 3H26V9H20ZM28 3H34V9H28ZM28 11H34V17H28ZM3 11H9V17H3ZM3 19H9V25H3ZM3 27H9V33H3ZM11 27H17V33H11Z" fill="#6dd0f3"/><path d="M22 21L33 32" stroke="#1e2c35" stroke-width="4.500"/><path d="M22 21L25 24" stroke="#e4b849" stroke-width="4"/><circle cx="16" cy="14.500" r="10.500" fill="#57c5ee" stroke="#17303e" stroke-width="1.500"/><path d="M7.500 12A9 9 0 0 1 24 11Q16 15 7.500 12Z" fill="#b3e7fa" opacity=".6"/></svg>
    <span class="ml-[8px] h-[36px] w-[2px] bg-[#8d8c8b]"></span>
    <svg class="ml-[7px] w-[39px] h-[36px]" viewBox="0 0 39 36"><path d="M1 2Q1 .5 3 .5H14Q16 .5 16 3V5H31V31H3Q1 31 1 29Z" fill="#808080" stroke="#555"/><path d="M6 10.500H37.500L36.500 33H4Z" fill="#719fd5" stroke="#3a6bad"/><path d="M6 11.500H36.500L36 20L5 25Z" fill="#9cbde6" opacity=".6"/><path d="M3 35H36" stroke="#b9b9b9" stroke-width="1.500"/></svg>
    <svg class="ml-[8px] w-[42px] h-[41px]" viewBox="0 0 42 41"><rect x=".7" y=".7" width="40.600" height="38.600" rx="4" fill="#a9aba7" stroke="#4f524d" stroke-width="1.400"/><rect x="4" y="4" width="34" height="30" rx="2" fill="#17230d" stroke="#e1e1de"/><path d="M6 6H36V17Q20 17 6 26Z" fill="#4b6a30"/><path d="M6 9H36M6 12H36M6 15H36M6 18H36M6 21H36M6 24H36M6 27H36" stroke="#253a15" stroke-width=".6"/><path d="M10 15L17 18.500L10 22M17 29H27" fill="none" stroke="#eef5e8" stroke-width="2"/><path d="M28 36.500H30" stroke="#8fe635" stroke-width="2"/></svg>
    <svg class="ml-[6px] w-[42px] h-[45px]"><use href="#firefox"/></svg>
  </div>

  <!-- Launcher tooltip -->
  <div class="absolute left-[528px] top-[604px] flex h-[60px] w-[214px] rounded bg-[#0b0b0b]/83 text-white">
    <svg class="ml-[15px] mt-[17px] w-[21px] h-[25px]" ><use href="#cabinet"/></svg>
    <div class="ml-4 mt-[13px] text-[13.33px] leading-[17px] [text-shadow:1px_1px_1px_#000]"><div class="font-bold">File Manager</div><div class="text-[13px]">Browse the file system</div></div>
  </div>
</div>
</body>
</html>
